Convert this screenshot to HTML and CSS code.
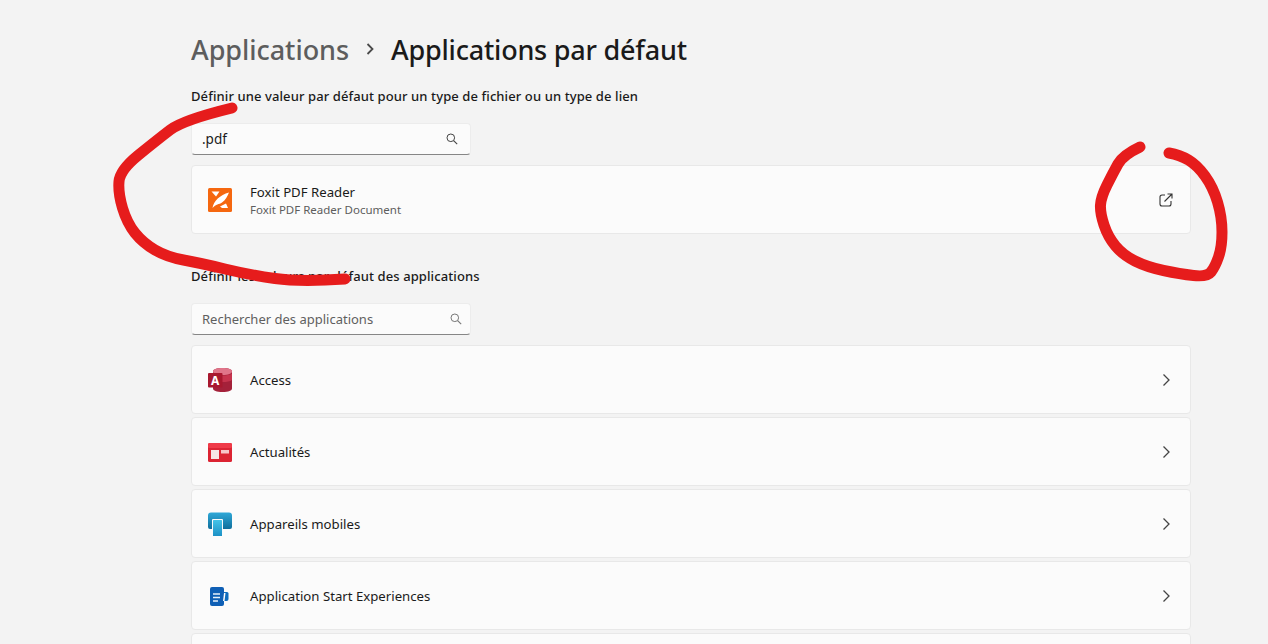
FILE: index.html
```html
<!DOCTYPE html>
<html lang="fr">
<head>
<meta charset="utf-8">
<title>Applications par défaut</title>
<link rel="stylesheet" href="styles.css">
</head>
<body>
<main class="page">
  <h1 class="crumbs">
    <span class="crumb-parent">Applications</span>
    <svg class="crumb-sep" width="10" height="14" viewBox="0 0 10 14"><path d="M2.500 2 7.500 7l-5 5" fill="none" stroke="#4a4a4a" stroke-width="1.800"/></svg>
    <span class="crumb-current">Applications par défaut</span>
  </h1>

  <h2 class="section-title first">Définir une valeur par défaut pour un type de fichier ou un type de lien</h2>
  <div class="search">
    <span class="search-value">.pdf</span>
    <svg class="search-icon" width="12" height="12" viewBox="0 0 12 12"><circle cx="4.800" cy="4.800" r="3.800" fill="none" stroke="#444" stroke-width="1"/><path d="m7.600 7.600 3.600 3.600" stroke="#444" stroke-width="1.100"/></svg>
  </div>
  <div class="card">
    <svg class="app-icon" width="24" height="24" viewBox="0 0 24 24">
      <rect width="24" height="24" rx="1.500" fill="#f5670f"/>
      <path d="M4.500 20C5.500 13 12 7 21 4.500 19.500 8 17.500 12 14 14.500 11 16.500 8 16 4.500 20z" fill="#fff"/>
      <path d="M3.500 3.500h8L8 8.500z" fill="#fff"/>
      <path d="M12 18.500 18 15.500l2 4.500h-6z" fill="#fff"/>
    </svg>
    <div class="app-text">
      <div class="app-name">Foxit PDF Reader</div>
      <div class="app-sub">Foxit PDF Reader Document</div>
    </div>
    <svg class="trail external" width="14" height="14" viewBox="0 0 14 14"><path d="M6 2H3a2 2 0 0 0-2 2v7a2 2 0 0 0 2 2h7a2 2 0 0 0 2-2V8" fill="none" stroke="#333" stroke-width="1.100"/><path d="M5.500 8.500 13 1M8.500 1H13v4.500" fill="none" stroke="#333" stroke-width="1.100"/></svg>
  </div>

  <h2 class="section-title second">Définir les valeurs par défaut des applications</h2>
  <div class="search">
    <span class="search-placeholder">Rechercher des applications</span>
    <svg class="search-icon dim" width="12" height="12" viewBox="0 0 12 12"><circle cx="4.800" cy="4.800" r="3.800" fill="none" stroke="#777" stroke-width="1"/><path d="m7.600 7.600 3.600 3.600" stroke="#777" stroke-width="1.100"/></svg>
  </div>

  <div class="list">
    <div class="card">
      <svg class="app-icon" width="24" height="24" viewBox="0 0 24 24">
        <path d="M5 3.500C5 1.500 8.500 0 14.500 0S24 1.500 24 3.500V20.500C24 22.500 20.500 24 14.500 24S5 22.500 5 20.500z" fill="#a4213a"/>
        <path d="M5 3.500C5 1.500 8.500 0 14.500 0S24 1.500 24 3.500 20.500 7 14.500 7 5 5.500 5 3.500z" fill="#e0758a"/>
        <path d="M5 5.500C7 7 10.500 7.500 14.500 7.500S22 7 24 5.500V12c-2 1.500-5.500 2-9.500 2S7 13.500 5 12z" fill="#c6344e"/>
        <rect y="5" width="14.500" height="14.500" rx="1" fill="#a8182f"/>
        <text x="7.250" y="16.800" class="access-letter" text-anchor="middle">A</text>
      </svg>
      <div class="app-text"><div class="app-name">Access</div></div>
      <svg class="trail chevron" width="10" height="14" viewBox="0 0 10 14"><path d="m2.500 1.500 5.500 5.500-5.500 5.500" fill="none" stroke="#444" stroke-width="1.300"/></svg>
    </div>
    <div class="card">
      <svg class="app-icon" width="24" height="24" viewBox="0 0 24 24">
        <rect y="3" width="24" height="19" rx="1.500" fill="#dc2433"/>
        <rect y="3" width="24" height="5" rx="1.500" fill="#ef3a48"/>
        <rect x="3" y="10" width="8" height="9" fill="#f6e6e6"/>
        <rect x="13" y="10" width="8" height="3.500" fill="#f7c5c8"/>
      </svg>
      <div class="app-text"><div class="app-name">Actualités</div></div>
      <svg class="trail chevron" width="10" height="14" viewBox="0 0 10 14"><path d="m2.500 1.500 5.500 5.500-5.500 5.500" fill="none" stroke="#444" stroke-width="1.300"/></svg>
    </div>
    <div class="card">
      <svg class="app-icon" width="24" height="24" viewBox="0 0 24 24">
        <defs>
          <linearGradient id="mon" x1="0" y1="0" x2="0" y2="1"><stop offset="0" stop-color="#2fa8d8"/><stop offset="1" stop-color="#0f6f9c"/></linearGradient>
          <linearGradient id="tel" x1="0" y1="0" x2="0" y2="1"><stop offset="0" stop-color="#45c4e8"/><stop offset="1" stop-color="#1b8fc4"/></linearGradient>
        </defs>
        <path d="M0 15V3.500A3 3 0 0 1 3 .5h18a3 3 0 0 1 3 3V15a2 2 0 0 1-2 2H2a2 2 0 0 1-2-2z" fill="url(#mon)"/>
        <rect x="4" y="7" width="11" height="17.500" rx="1" fill="#fbfbfb"/>
        <rect x="5" y="8" width="9" height="16.500" rx=".5" fill="url(#tel)"/>
      </svg>
      <div class="app-text"><div class="app-name">Appareils mobiles</div></div>
      <svg class="trail chevron" width="10" height="14" viewBox="0 0 10 14"><path d="m2.500 1.500 5.500 5.500-5.500 5.500" fill="none" stroke="#444" stroke-width="1.300"/></svg>
    </div>
    <div class="card">
      <svg class="app-icon" width="24" height="24" viewBox="0 0 24 24">
        <path d="M13 8h6a1.500 1.500 0 0 1 1.500 1.500V15a2 2 0 0 1-2 2H13z" fill="#0f6cbd"/>
        <rect x="2" y="3" width="14" height="19" rx="2" fill="#0f5fb5"/>
        <path d="M5 10h7M5 13.500h7M5 17h5" stroke="#e8f1fa" stroke-width="1.400"/>
        <path d="M16 9h1.500l-1 8H15z" fill="#fff"/>
      </svg>
      <div class="app-text"><div class="app-name">Application Start Experiences</div></div>
      <svg class="trail chevron" width="10" height="14" viewBox="0 0 10 14"><path d="m2.500 1.500 5.500 5.500-5.500 5.500" fill="none" stroke="#444" stroke-width="1.300"/></svg>
    </div>
    <div class="card"></div>
  </div>
</main>

<svg class="scribble" width="1268" height="644" viewBox="0 0 1268 644" fill="none">
  <path d="M232 108Q183 120 170 130Q157 140 138.500 155Q120 170 119 181.500Q118 193 122.500 208Q127 223 135 233Q143 243 155 250Q167 257 183.500 260Q200 263 225 269Q250 275 275 278.500Q300 282 345 279"/>
  <path d="M1140 147Q1123 155 1118 164Q1113 173 1107 185Q1101 197 1100.500 205Q1100 213 1104 225Q1108 237 1115.500 246Q1123 255 1135 261Q1147 267 1163.500 270.500Q1180 274 1193.500 275.500Q1207 277 1211 272Q1215 267 1218.500 257Q1222 247 1222 232Q1222 217 1217.500 202Q1213 187 1205 176Q1197 165 1188.500 160Q1180 155 1169 153"/>
</svg>
</body>
</html>
```

FILE: styles.css
```css
* { box-sizing: border-box; }
html, body { margin: 0; height: 644px; overflow: hidden; }
body {
  position: relative;
  background: #f3f3f3;
  color: #1a1a1a;
  font-family: "Noto Sans", "Open Sans", sans-serif;
}
.page { width: 1000px; height: 644px; overflow: hidden; margin-left: 191px; padding-top: 30px; }
.crumbs {
  display: flex;
  align-items: center;
  height: 38px;
  margin: 0;
  font-size: 27px;
  font-weight: 500;
  letter-spacing: -0.22px;
}
.crumb-parent { color: #5d5d5d; letter-spacing: -0.05px; }
.crumb-sep { margin: 0 16px; }
.crumb-current { color: #1a1a1a; }
.section-title {
  margin: 0;
  height: 20px;
  font-size: 13px;
  line-height: 20px;
  font-weight: 500;
  letter-spacing: 0.1px;
}
.section-title.first { margin-top: 18px; }
.section-title.second { margin-top: 32px; }
.search {
  display: flex;
  align-items: center;
  justify-content: space-between;
  width: 280px;
  height: 32px;
  margin-top: 17px;
  padding: 0 12px 0 10px;
  background: #fbfbfb;
  border: 1px solid #ececec;
  border-bottom: 1px solid #868686;
  border-radius: 4px;
  font-size: 13.500px;
}
.search + .card { margin-top: 10px; }
.search-placeholder { color: #5f5f5f; font-size: 13px; }
.search-icon.dim { margin-right: -4px; }
.list { display: flex; flex-direction: column; gap: 3px; margin-top: 10px; }
.card {
  display: flex;
  align-items: center;
  flex: none;
  height: 69px;
  padding: 0 18px 0 16px;
  background: #fbfbfb;
  border: 1px solid #e8e8e8;
  border-radius: 4px;
}
.app-icon { flex: none; margin-top: 1px; }
.app-text { flex: 1; margin-left: 18px; padding-top: 2px; }
.app-name { font-size: 13.200px; line-height: 19px; color: #1a1a1a; }
.app-sub { font-size: 11.500px; line-height: 16px; color: #5d5d5d; }
.trail { flex: none; }
.chevron { margin-right: 1px; }
.external { margin-right: -1px; }
.access-letter { font-size: 12px; font-weight: 700; fill: #fff; font-family: "Noto Sans", sans-serif; }
.scribble { position: absolute; left: 0; top: 0; pointer-events: none; }
.scribble path { stroke: #e61c1c; stroke-width: 11; stroke-linecap: round; stroke-linejoin: round; }
```
